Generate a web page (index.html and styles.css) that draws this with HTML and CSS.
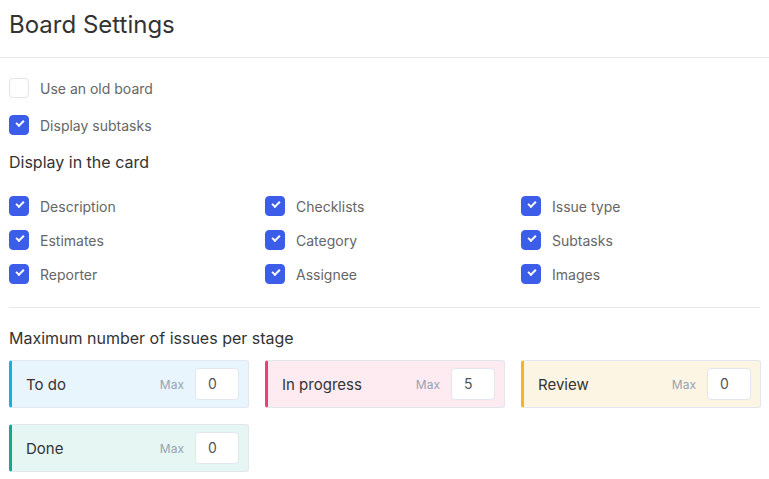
FILE: index.html
```html
<!DOCTYPE html>
<html lang="en">
<head>
    <meta charset="UTF-8">
    <meta name="viewport" content="width=device-width, initial-scale=1.0">
    <title>Board Settings</title>
    <link rel="stylesheet" href="styles.css">
</head>
<body>
    <header class="page-header">
        <h1>Board Settings</h1>
    </header>
    <main class="content">
        <div class="options">
            <label class="check"><span class="box"></span>Use an old board</label>
            <label class="check"><span class="box on"></span>Display subtasks</label>
        </div>
        <h2>Display in the card</h2>
        <div class="card-grid">
            <label class="check"><span class="box on"></span>Description</label>
            <label class="check"><span class="box on"></span>Checklists</label>
            <label class="check"><span class="box on"></span>Issue type</label>
            <label class="check"><span class="box on"></span>Estimates</label>
            <label class="check"><span class="box on"></span>Category</label>
            <label class="check"><span class="box on"></span>Subtasks</label>
            <label class="check"><span class="box on"></span>Reporter</label>
            <label class="check"><span class="box on"></span>Assignee</label>
            <label class="check"><span class="box on"></span>Images</label>
        </div>
        <hr class="divider">
        <h2 class="stage-title">Maximum number of issues per stage</h2>
        <div class="stages">
            <div class="stage todo"><span class="name">To do</span><span class="max">Max</span><span class="num">0</span></div>
            <div class="stage progress"><span class="name">In progress</span><span class="max">Max</span><span class="num">5</span></div>
            <div class="stage review"><span class="name">Review</span><span class="max">Max</span><span class="num">0</span></div>
            <div class="stage done"><span class="name">Done</span><span class="max">Max</span><span class="num">0</span></div>
        </div>
    </main>
</body>
</html>
```
FILE: styles.css
```css
body {
    font-family: 'Inter', 'Noto Sans', sans-serif;
    margin: 0;
    padding: 0;
    background: #fff;
    color: #333;
}
.page-header {
    height: 58px;
    border-bottom: 1px solid #e6e6ee;
    padding: 0 9px;
    box-sizing: border-box;
}
.page-header h1 {
    margin: 0;
    font-size: 24px;
    font-weight: 400;
    line-height: 50px;
    color: #333;
}
.content {
    padding: 0 9px;
}
.options {
    padding-top: 20px;
    display: flex;
    flex-direction: column;
    gap: 17px;
}
.check {
    display: flex;
    align-items: center;
    gap: 11px;
    font-size: 14px;
    color: #666;
    height: 20px;
}
.box {
    width: 20px;
    height: 20px;
    box-sizing: border-box;
    border: 1px solid #e3e3ec;
    border-radius: 4px;
    background: #fff;
    flex-shrink: 0;
    position: relative;
}
.box.on {
    background: #3b5de7;
    border-color: #3b5de7;
}
.box.on::after {
    content: "";
    position: absolute;
    left: 6px;
    top: 4px;
    width: 6px;
    height: 3px;
    border-left: 2px solid #fff;
    border-bottom: 2px solid #fff;
    transform: rotate(-45deg);
}
h2 {
    font-size: 16px;
    font-weight: 400;
    color: #333;
    margin: 17px 0 0;
    line-height: 20px;
}
.card-grid {
    display: grid;
    grid-template-columns: 256px 256px 240px;
    row-gap: 14px;
    margin-top: 24px;
}
.divider {
    border: 0;
    border-top: 1px solid #e6e6ee;
    margin: 23px 0 0;
    width: 751px;
}
.stage-title {
    margin-top: 20px;
}
.stages {
    display: grid;
    grid-template-columns: 240px 240px 240px;
    gap: 16px;
    margin-top: 12px;
}
.stage {
    height: 48px;
    box-sizing: border-box;
    border: 1px solid #e4e6ef;
    border-left: 3px solid;
    border-radius: 3px;
    display: flex;
    align-items: center;
    padding: 0 9px 0 14px;
}
.stage .name {
    flex: 1;
    font-size: 15px;
    color: #333;
}
.stage .max {
    font-size: 12px;
    color: #98a2b3;
    margin-right: 11px;
}
.stage .num {
    width: 44px;
    height: 32px;
    box-sizing: border-box;
    background: #fff;
    border: 1px solid #e4e6ef;
    border-radius: 4px;
    font-size: 14px;
    color: #555;
    padding-left: 12px;
    line-height: 30px;
}
.todo {
    background: #e8f5fd;
    border-left-color: #16aee6;
}
.progress {
    background: #fdebf1;
    border-left-color: #ec407a;
}
.review {
    background: #fdf5e3;
    border-left-color: #f8b51b;
}
.done {
    background: #e5f6f3;
    border-left-color: #16a88f;
}
```
